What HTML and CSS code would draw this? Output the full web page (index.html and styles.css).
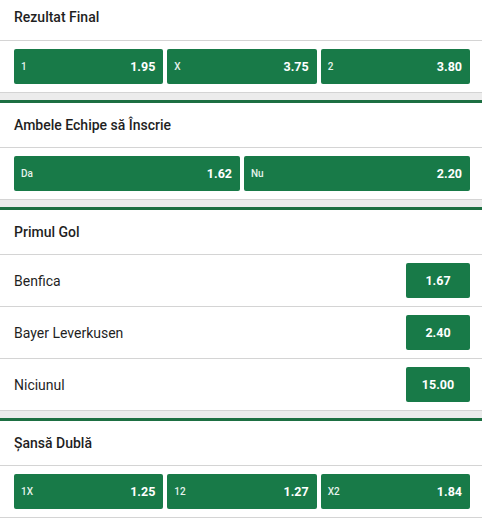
FILE: index.html
```html
<!DOCTYPE html>
<html lang="ro">
<head>
<meta charset="utf-8">
<title>Piețe</title>
<link rel="stylesheet" href="styles.css">
</head>
<body>
<div class="markets">
  <section class="market first">
    <div class="market-head">Rezultat Final</div>
    <div class="odds-row cols-3">
      <button class="odd"><span class="lbl">1</span><span class="val">1.95</span></button>
      <button class="odd"><span class="lbl">X</span><span class="val">3.75</span></button>
      <button class="odd"><span class="lbl">2</span><span class="val">3.80</span></button>
    </div>
  </section>
  <section class="market">
    <div class="market-head">Ambele Echipe să Înscrie</div>
    <div class="odds-row cols-2">
      <button class="odd"><span class="lbl">Da</span><span class="val">1.62</span></button>
      <button class="odd"><span class="lbl">Nu</span><span class="val">2.20</span></button>
    </div>
  </section>
  <section class="market">
    <div class="market-head">Primul Gol</div>
    <div class="sel-row"><span class="sel-name">Benfica</span><button class="odd small"><span class="val">1.67</span></button></div>
    <div class="sel-row"><span class="sel-name">Bayer Leverkusen</span><button class="odd small"><span class="val">2.40</span></button></div>
    <div class="sel-row"><span class="sel-name">Niciunul</span><button class="odd small"><span class="val">15.00</span></button></div>
  </section>
  <section class="market">
    <div class="market-head">Șansă Dublă</div>
    <div class="odds-row cols-3">
      <button class="odd"><span class="lbl">1X</span><span class="val">1.25</span></button>
      <button class="odd"><span class="lbl">12</span><span class="val">1.27</span></button>
      <button class="odd"><span class="lbl">X2</span><span class="val">1.84</span></button>
    </div>
  </section>
</div>
</body>
</html>
```
FILE: styles.css
```css
html, body {
  margin: 0;
  padding: 0;
  background: #ececec;
}
body {
  font-family: Roboto, "Liberation Sans", Arial, sans-serif;
  color: #1f1f1f;
  width: 482px;
  overflow: hidden;
}
.markets {
  display: flex;
  flex-direction: column;
  gap: 7px;
}
.market {
  background: #fff;
  border-top: 3px solid #1d6f42;
}
.market.first {
  border-top: none;
}
.market-head {
  height: 45px;
  box-sizing: border-box;
  display: flex;
  align-items: center;
  padding-left: 14px;
  font-size: 14px;
  font-weight: 500;
  border-bottom: 1px solid #d4d4d4;
}
.market.first .market-head {
  height: 41px;
  padding-bottom: 6px;
}
.odds-row {
  display: grid;
  gap: 4px;
  padding: 8px 12px 8px 14px;
  border-bottom: 1px solid #d4d4d4;
}
.cols-3 { grid-template-columns: repeat(3, 1fr); }
.cols-2 { grid-template-columns: repeat(2, 1fr); }
.odd {
  height: 35px;
  border: none;
  border-radius: 2px;
  background: #187a48;
  color: #fff;
  font-family: inherit;
  display: flex;
  align-items: center;
  justify-content: space-between;
  padding: 0 8px 0 7px;
  margin: 0;
}
.lbl {
  font-size: 10px;
  font-weight: 500;
  color: #e6f2ec;
}
.val {
  font-size: 12.5px;
  font-weight: 700;
  color: #fff;
}
.sel-row {
  display: flex;
  align-items: center;
  justify-content: space-between;
  padding: 8px 12px 8px 14px;
  border-bottom: 1px solid #d4d4d4;
}
.sel-name {
  font-size: 14px;
  color: #1f1f1f;
}
.odd.small {
  width: 64px;
  justify-content: center;
  padding: 0;
}
```
